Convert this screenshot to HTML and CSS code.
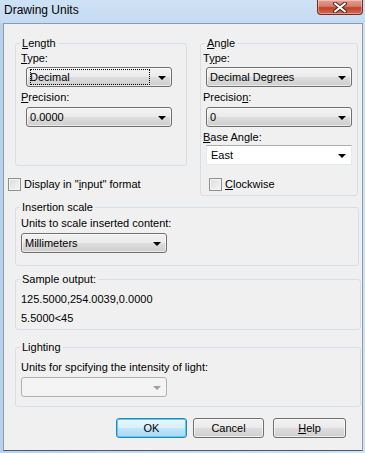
FILE: index.html
```html
<!DOCTYPE html>
<html>
<head>
<meta charset="utf-8">
<title>Drawing Units</title>
<link rel="stylesheet" href="styles.css">
</head>
<body>
<div class="window">
  <div class="titlebar">
    <span class="title">Drawing Units</span>
    <div class="close">
      <svg width="16" height="11" viewBox="0 0 16 11"><path d="M3 1.5 L13 9.5 M13 1.5 L3 9.5" stroke="#4a2a26" stroke-width="4" stroke-linecap="round"/><path d="M3 1.5 L13 9.5 M13 1.5 L3 9.5" stroke="#ffffff" stroke-width="2" stroke-linecap="round"/></svg>
    </div>
  </div>
  <div class="client">
    <div class="top-row">
      <div class="col-left">
        <fieldset class="group length">
          <legend><u>L</u>ength</legend>
          <div class="lbl first"><u>T</u>ype:</div>
          <div class="combo ro ml5"><span class="val focus">Decimal</span><span class="arrow"></span></div>
          <div class="lbl"><u>P</u>recision:</div>
          <div class="combo ro ml5"><span class="val">0.0000</span><span class="arrow"></span></div>
        </fieldset>
        <div class="check display"><span class="box"></span><span>Display in "<u>i</u>nput" format</span></div>
      </div>
      <fieldset class="group angle">
        <legend><u>A</u>ngle</legend>
        <div class="lbl first">T<u>y</u>pe:</div>
        <div class="combo ro ml3"><span class="val">Decimal Degrees</span><span class="arrow"></span></div>
        <div class="lbl">Precisio<u>n</u>:</div>
        <div class="combo ro ml3"><span class="val">0</span><span class="arrow"></span></div>
        <div class="lbl"><u>B</u>ase Angle:</div>
        <div class="combo edit ml3"><span class="val">East</span><span class="arrow"></span></div>
        <div class="check clockwise"><span class="box"></span><span><u>C</u>lockwise</span></div>
      </fieldset>
    </div>
    <fieldset class="group insertion">
      <legend>Insertion scale</legend>
      <div class="lbl first">Units to scale inserted content:</div>
      <div class="combo ro ml0 units"><span class="val">Millimeters</span><span class="arrow"></span></div>
    </fieldset>
    <fieldset class="group sample">
      <legend>Sample output:</legend>
      <div class="out first">125.5000,254.0039,0.0000</div>
      <div class="out second">5.5000&lt;45</div>
    </fieldset>
    <fieldset class="group lighting">
      <legend>Lighting</legend>
      <div class="lbl first">Units for spcifying the intensity of light:</div>
      <div class="combo disabled ml0 units"><span class="val"></span><span class="arrow"></span></div>
    </fieldset>
    <div class="buttons">
      <div class="btn default ok">OK</div>
      <div class="btn cancel">Cancel</div>
      <div class="btn help"><u>H</u>elp</div>
    </div>
  </div>
</div>
</body>
</html>
```
FILE: styles.css
```css
* { box-sizing: border-box; }
html, body { margin: 0; padding: 0; }
body {
  width: 365px;
  height: 453px;
  overflow: hidden;
  font-family: "Liberation Sans", Arial, sans-serif;
  font-size: 11px;
  color: #000;
}
u { text-decoration: underline; text-underline-offset: 1px; }

.window {
  width: 365px;
  height: 453px;
  background: linear-gradient(90deg, #b9d1ea 0%, #c6dcf3 50%, #d0e3f6 100%);
  display: flex;
  flex-direction: column;
}
.titlebar {
  height: 23px;
  display: flex;
  align-items: flex-start;
  justify-content: space-between;
  background: linear-gradient(180deg, #cfe2f5 0%, #c4dbf2 100%);
}
.title {
  font-size: 12px;
  line-height: 14px;
  padding: 3px 0 0 4px;
  color: #000;
}
.close {
  width: 46px;
  height: 15px;
  margin-right: 2px;
  border: 1px solid #7b2a1f;
  border-top: none;
  border-radius: 0 0 4px 4px;
  background: linear-gradient(180deg, #e6a093 0%, #d47c6b 45%, #c4412a 55%, #d46a4f 100%);
  box-shadow: inset 0 0 0 1px rgba(255,255,255,0.35);
  display: flex;
  align-items: center;
  justify-content: center;
}
.close svg { display: block; }

.client {
  margin: 0 2px 2px 3px;
  width: 360px;
  height: 428px;
  background: #f0f0f0;
  border: 1px solid #8c9aab;
  border-color: #8c9aab #8c9aab #4f5a66 #8c9aab;
}

.top-row {
  display: flex;
  align-items: flex-start;
  padding-top: 12px;
}
.col-left {
  display: flex;
  flex-direction: column;
  width: 182px;
}

.group {
  margin: 0;
  padding: 0;
  border: 1px solid #d5dfe5;
  border-radius: 3px;
  min-width: 0;
}
.group legend {
  padding: 0 2px;
  margin-left: 4px;
  line-height: 14px;
  height: 14px;
}
.lbl {
  line-height: 14px;
  height: 14px;
  margin-top: 3px;
  padding-left: 5px;
  white-space: nowrap;
}
.lbl.first { margin-top: 1px; }

.length {
  margin-left: 11px;
  width: 172px;
  padding-bottom: 38px;
}
.angle {
  margin-left: 14px;
  width: 158px;
  padding-bottom: 4px;
}
.angle .lbl { padding-left: 2px; }

.combo {
  height: 20px;
  width: 146px;
  margin-top: 3px;
  border-radius: 3px;
  display: flex;
  align-items: center;
  padding: 0 5px 0 3px;
}
.ml5 { margin-left: 10px; }
.ml3 { margin-left: 5px; }
.ml0 { margin-left: 5px; }
.lbl.first + .combo { margin-top: 2px; }
.angle .lbl + .combo.edit { margin-top: 1px; }
.combo + .lbl { margin-top: 3px; }

.combo.ro {
  border: 1px solid #707070;
  background: linear-gradient(180deg, #f2f2f2 0%, #ebebeb 48%, #dddddd 52%, #cfcfcf 100%);
  box-shadow: inset 0 0 0 1px rgba(255,255,255,0.55);
}
.combo.edit {
  border: 1px solid #e3e9ef;
  border-top-color: #abadb3;
  background: #fff;
  border-radius: 0;
  padding-left: 4px;
}
.combo.disabled {
  border: 1px solid #adb2b5;
  background: #f4f4f4;
}
.val {
  flex: 1;
  line-height: 14px;
  height: 16px;
  padding: 1px 0 0 0;
  white-space: nowrap;
}
.val.focus {
  outline: 1px dotted #000;
  outline-offset: -1px;
  margin-right: 8px;
  padding-left: 0;
}
.arrow {
  width: 0;
  height: 0;
  border-left: 4px solid transparent;
  border-right: 4px solid transparent;
  border-top: 4px solid #000;
  margin-top: 1px;
}
.combo.disabled .arrow { border-top-color: #a0a0a0; }

.check {
  display: flex;
  align-items: center;
  height: 14px;
  line-height: 14px;
}
.check .box {
  width: 13px;
  height: 13px;
  border: 1px solid #8e8f8f;
  background: linear-gradient(135deg, #dcdcdc 0%, #f6f6f6 100%);
  box-shadow: inset 0 0 0 1px #f4f4f4;
  margin-right: 3px;
}
.display {
  margin-left: 4px;
  margin-top: 11px;
}
.clockwise {
  margin-left: 8px;
  margin-top: 12px;
}

.insertion {
  margin: 4px 0 0 11px;
  width: 344px;
  padding-bottom: 12px;
}
.insertion .lbl.first { margin-top: 2px; }
.insertion .lbl.first + .combo.units,
.lighting .lbl.first + .combo.units { margin-top: 3px; }

.sample {
  margin: 6px 0 0 11px;
  width: 346px;
  padding-bottom: 4px;
}
.out {
  line-height: 14px;
  height: 14px;
  padding-left: 5px;
}
.out.first { margin-top: 6px; }
.out.second { margin-top: 5px; }

.lighting {
  margin: 10px 0 0 11px;
  width: 346px;
  padding-bottom: 9px;
}
.lighting .lbl.first { margin-top: 6px; }

.buttons {
  display: flex;
  margin-top: 11px;
  padding-left: 112px;
}
.btn {
  height: 20px;
  border: 1px solid #707070;
  border-radius: 3px;
  background: linear-gradient(180deg, #f2f2f2 0%, #ebebeb 48%, #dddddd 52%, #cfcfcf 100%);
  box-shadow: inset 0 0 0 1px rgba(255,255,255,0.6);
  display: flex;
  align-items: center;
  justify-content: center;
  line-height: 14px;
}
.btn.ok { width: 71px; }
.btn.cancel { width: 71px; margin-left: 6px; }
.btn.help { width: 73px; margin-left: 9px; }
.btn.default {
  border-color: #3c7fb1;
  background: linear-gradient(180deg, #eaf6fd 0%, #d9f0fc 48%, #bee6fd 52%, #a7d9f5 100%);
  box-shadow: inset 0 0 0 1px #48d2f7;
}
```
